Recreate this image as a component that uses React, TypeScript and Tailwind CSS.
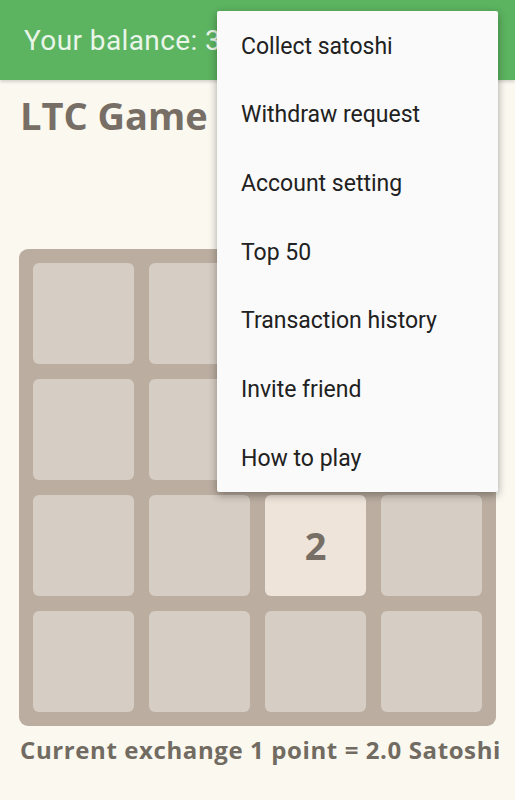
import React from 'react';

const menuItems = [
  'Collect satoshi',
  'Withdraw request',
  'Account setting',
  'Top 50',
  'Transaction history',
  'Invite friend',
  'How to play',
];

// 4x4 board, only one tile has a value
const board: (number | null)[] = [
  null, null, null, null,
  null, null, null, null,
  null, null, 2, null,
  null, null, null, null,
];

const Tile: React.FC<{ value: number | null }> = ({ value }) => (
  <div
    className={
      value
        ? 'h-[101px] rounded-[6px] bg-[#eee4da] flex items-center justify-center text-[38px] font-bold text-[#776e65]'
        : 'h-[101px] rounded-[6px] bg-[#d6cdc4]'
    }
  >
    {value}
  </div>
);

const App: React.FC = () => {
  return (
    <div className="relative w-[515px] h-[800px] overflow-hidden bg-[#faf8ef] font-['Roboto',sans-serif]">
      <header className="h-[80px] bg-[#5cb360] flex items-center pl-[24px] shadow-[0_2px_3px_rgba(0,0,0,0.15)]">
        <span className="text-[28px] tracking-[0.4px] leading-none mt-[2px] text-[#e9f5e9]">Your balance: 3</span>
      </header>

      <div className="px-[19px] font-['Open_Sans',sans-serif]">
        <h1 className="pt-[10px] pl-[1px] text-[38px] font-bold leading-[50px] text-[#776e65]">LTC Game</h1>

        <div className="mt-[109px] w-[477px] rounded-[9px] bg-[#bbada0] p-[14px] grid grid-cols-4 gap-[15px]">
          {board.map((v, i) => (
            <Tile key={i} value={v} />
          ))}
        </div>

        <p className="mt-[8px] pl-[1px] text-[24px] tracking-[0.6px] font-bold leading-[32px] text-[#716b62] whitespace-nowrap">
          Current exchange 1 point = 2.0 Satoshi
        </p>
      </div>

      {/* overflow menu */}
      <div className="absolute left-[217px] top-[11px] w-[281px] bg-[#fafafa] rounded-[2px] shadow-[0_3px_8px_rgba(0,0,0,0.35)]">
        {menuItems.map((item) => (
          <div key={item} className="h-[68.7px] flex items-center pl-[24px] pt-[3px] text-[23px] text-[#212121]">
            {item}
          </div>
        ))}
      </div>
    </div>
  );
};

export default App;
